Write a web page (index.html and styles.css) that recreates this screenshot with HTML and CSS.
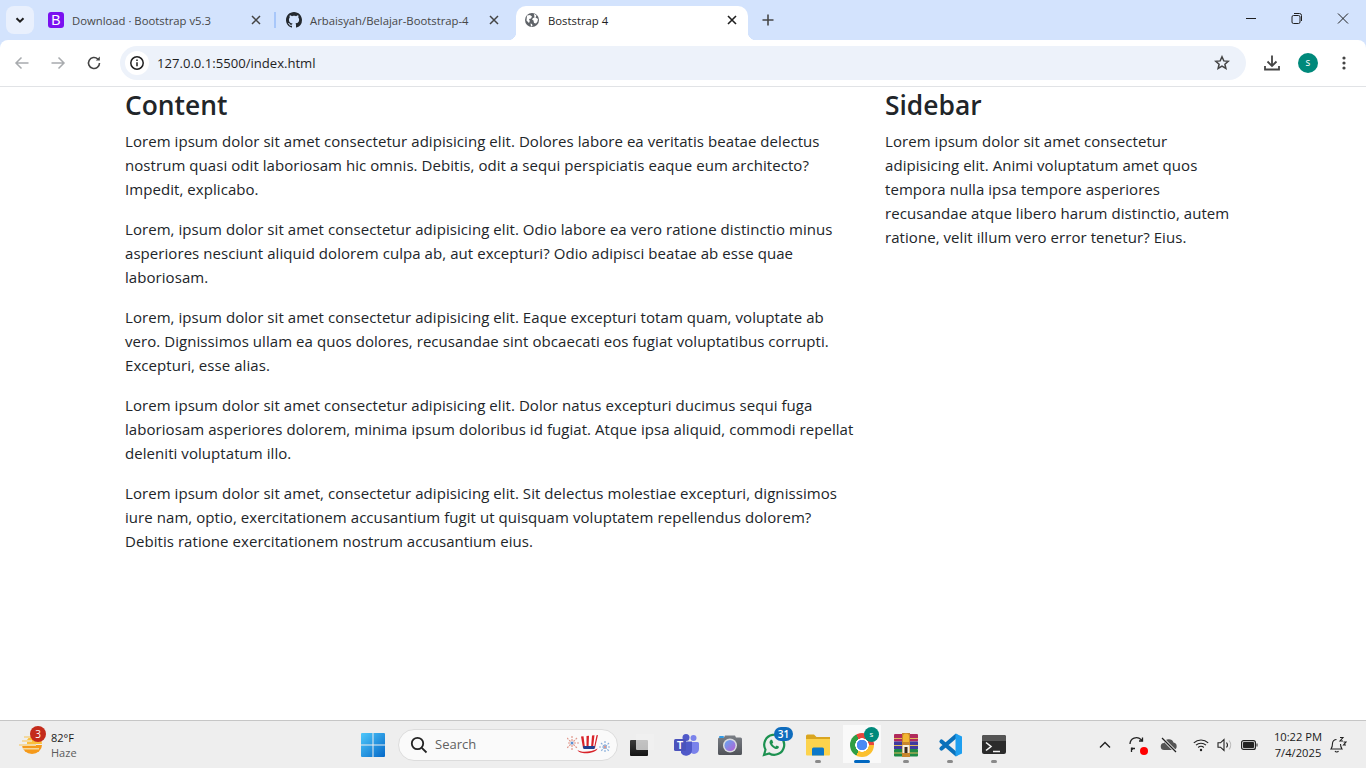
FILE: index.html
```html
<!DOCTYPE html>
<html lang="en">
  <head>
    <meta charset="UTF-8" />
    <title>Bootstrap 4</title>
    <link rel="stylesheet" href="styles.css">
  </head>
  <body>
    <!-- Browser tabs -->
    <div class="tabstrip">
      <button class="tab-menu">
        <svg width="12" height="12" viewBox="0 0 12 12" fill="none" stroke="#1f1f1f" stroke-width="2">
          <path d="M2.5 4.2 6 7.7l3.5-3.5"></path>
        </svg>
      </button>
      <div class="tab">
        <span class="favicon-bootstrap">B</span>
        <span class="tab-title">Download · Bootstrap v5.3</span>
        <svg class="tab-close" width="10" height="10" viewBox="0 0 10 10" stroke="#444" stroke-width="1.5"><path d="M1 1l8 8M9 1l-8 8"></path></svg>
      </div>
      <div class="tab-sep"></div>
      <div class="tab">
        <svg class="favicon" width="16" height="16" viewBox="0 0 16 16" fill="#24292f">
          <path d="M8 0C3.58 0 0 3.58 0 8c0 3.54 2.29 6.53 5.47 7.59.4.07.55-.17.55-.38 0-.19-.01-.82-.01-1.49-2.01.37-2.53-.49-2.69-.94-.09-.23-.48-.94-.82-1.13-.28-.15-.68-.52-.01-.53.63-.01 1.08.58 1.23.82.72 1.21 1.87.87 2.33.66.07-.52.28-.87.51-1.07-1.78-.2-3.64-.89-3.64-3.95 0-.87.31-1.59.82-2.15-.08-.2-.36-1.02.08-2.12 0 0 .67-.21 2.2.82.64-.18 1.32-.27 2-.27.68 0 1.36.09 2 .27 1.53-1.04 2.2-.82 2.2-.82.44 1.1.16 1.92.08 2.12.51.56.82 1.27.82 2.15 0 3.07-1.87 3.75-3.65 3.95.29.25.54.73.54 1.48 0 1.07-.01 1.93-.01 2.2 0 .21.15.46.55.38A8.013 8.013 0 0016 8c0-4.42-3.58-8-8-8z"></path>
        </svg>
        <span class="tab-title">Arbaisyah/Belajar-Bootstrap-4</span>
        <svg class="tab-close" width="10" height="10" viewBox="0 0 10 10" stroke="#444" stroke-width="1.5"><path d="M1 1l8 8M9 1l-8 8"></path></svg>
      </div>
      <div class="tab-sep tab-sep-hidden"></div>
      <div class="tab tab-active">
        <svg class="favicon" width="16" height="16" viewBox="0 0 16 16">
          <circle cx="8" cy="8" r="7" fill="#5f6368"></circle>
          <path d="M3 3.5 6 3l2 1.5-1 2-2 .5.8 2L5 11 2.5 8.5zM10 1.8l2.5 1.7-1 2L14 7l-.5 2.5-1.5 2-2-.5-.5-2.500-1.500-1 1-1.500 1.500-.5zM6.500 11.500 8 12l.5 2-1.500.5z" fill="#fff"></path>
        </svg>
        <span class="tab-title tab-title-active">Boststrap 4</span>
        <svg class="tab-close" width="10" height="10" viewBox="0 0 10 10" stroke="#1f1f1f" stroke-width="1.6"><path d="M1 1l8 8M9 1l-8 8"></path></svg>
      </div>
      <button class="tab-new">
        <svg width="12" height="12" viewBox="0 0 12 12" stroke="#474747" stroke-width="1.6"><path d="M6 .5v11M.5 6h11"></path></svg>
      </button>
      <div class="window-controls">
        <svg width="46" height="12" viewBox="0 0 46 12" stroke="#1f1f1f"><path d="M18 5.5h10"></path></svg>
        <svg width="46" height="12" viewBox="0 0 46 12" fill="none" stroke="#1f1f1f"><rect x="18" y="2.5" width="8" height="8" rx="1.5"></rect><path d="M20 .5h5.500a2 2 0 0 1 2 2V8"></path></svg>
        <svg width="46" height="12" viewBox="0 0 46 12" stroke="#1f1f1f"><path d="M18 .5l10 10M28 .5l-10 10"></path></svg>
      </div>
    </div>

    <!-- Address bar -->
    <div class="toolbar">
      <svg class="tool-icon" width="16" height="16" viewBox="0 0 16 16" fill="none" stroke="#a8abae" stroke-width="1.5"><path d="M14.5 8H2M7.5 2.500 2 8l5.500 5.500"></path></svg>
      <svg class="tool-icon" width="16" height="16" viewBox="0 0 16 16" fill="none" stroke="#a8abae" stroke-width="1.5"><path d="M1.500 8H14M8.500 2.500 14 8l-5.500 5.500"></path></svg>
      <svg class="tool-icon" width="16" height="16" viewBox="0 0 16 16" fill="none" stroke="#444" stroke-width="1.6"><path d="M13.5 8A5.500 5.500 0 1 1 11.800 4"></path><path d="M13.800 1.500v4h-4" fill="#444" stroke="none"></path></svg>
      <div class="omnibox">
        <span class="site-info">
          <svg width="16" height="16" viewBox="0 0 16 16" fill="none" stroke="#1f1f1f" stroke-width="1.5"><circle cx="8" cy="8" r="6.2"></circle><path d="M8 7.200v4M8 4.500v1.500"></path></svg>
        </span>
        <span class="url">127.0.0.1:5500/index.html</span>
        <svg class="star" width="16" height="16" viewBox="0 0 16 16" fill="none" stroke="#444" stroke-width="1.5"><path d="M8 1.800l1.800 4.100 4.400.4-3.300 2.900 1 4.300L8 11.200l-3.900 2.300 1-4.300-3.300-2.900 4.400-.4z"></path></svg>
      </div>
      <svg class="download" width="16" height="16" viewBox="0 0 16 16" fill="none" stroke="#444" stroke-width="1.8"><path d="M8 .5v10M3.500 6.500 8 11l4.500-4.500M1 11v3.500h14V11"></path></svg>
      <span class="avatar">s</span>
      <svg class="dots" width="4" height="14" viewBox="0 0 4 14" fill="#444"><circle cx="2" cy="2" r="1.6"></circle><circle cx="2" cy="7" r="1.6"></circle><circle cx="2" cy="12" r="1.6"></circle></svg>
    </div>

    <!-- The page itself -->
    <main class="page">
      <div class="container">
        <div class="content">
          <h2>Content</h2>
          <p>Lorem ipsum dolor sit amet consectetur adipisicing elit. Dolores labore ea veritatis beatae delectus nostrum quasi odit laboriosam hic omnis. Debitis, odit a sequi perspiciatis eaque eum architecto? Impedit, explicabo.</p>
          <p>Lorem, ipsum dolor sit amet consectetur adipisicing elit. Odio labore ea vero ratione distinctio minus asperiores nesciunt aliquid dolorem culpa ab, aut excepturi? Odio adipisci beatae ab esse quae laboriosam.</p>
          <p>Lorem, ipsum dolor sit amet consectetur adipisicing elit. Eaque excepturi totam quam, voluptate ab vero. Dignissimos ullam ea quos dolores, recusandae sint obcaecati eos fugiat voluptatibus corrupti. Excepturi, esse alias.</p>
          <p>Lorem ipsum dolor sit amet consectetur adipisicing elit. Dolor natus excepturi ducimus sequi fuga laboriosam asperiores dolorem, minima ipsum doloribus id fugiat. Atque ipsa aliquid, commodi repellat deleniti voluptatum illo.</p>
          <p>Lorem ipsum dolor sit amet, consectetur adipisicing elit. Sit delectus molestiae excepturi, dignissimos iure nam, optio, exercitationem accusantium fugit ut quisquam voluptatem repellendus dolorem? Debitis ratione exercitationem nostrum accusantium eius.</p>
        </div>
        <div class="sidebar">
          <h2>Sidebar</h2>
          <p>Lorem ipsum dolor sit amet consectetur adipisicing elit. Animi voluptatum amet quos tempora nulla ipsa tempore asperiores recusandae atque libero harum distinctio, autem ratione, velit illum vero error tenetur? Eius.</p>
        </div>
      </div>
    </main>

    <!-- Windows taskbar -->
    <footer class="taskbar">
      <div class="weather">
        <span class="weather-icon">
          <svg width="26" height="24" viewBox="0 0 26 24">
            <path d="M4 13h20a10 9 0 0 1-20 0z" fill="#f59a1b"></path>
            <path d="M9 8a8 8 0 0 1 15 4H9z" fill="#fbbf3c"></path>
            <path d="M1 12h17v2H1zM4 8h10v2H4zM6 4h6v2H6zM5 16h16v1.500H5z" fill="#f3d9a0"></path>
          </svg>
          <span class="weather-badge">3</span>
        </span>
        <span class="weather-text">
          <span class="weather-temp">82°F</span>
          <span class="weather-desc">Haze</span>
        </span>
      </div>

      <div class="task-slot task-start">
        <svg width="24" height="24" viewBox="0 0 24 24">
          <defs>
            <linearGradient id="winBlue" x1="0" y1="0" x2="1" y2="1"><stop offset="0" stop-color="#4fc8fb"></stop><stop offset="1" stop-color="#0468c8"></stop></linearGradient>
          </defs>
          <path d="M0 1a1 1 0 0 1 1-1h10.500v11.500H0zM12.500 0H23a1 1 0 0 1 1 1v10.500H12.500zM0 12.500h11.500V24H1a1 1 0 0 1-1-1zM12.500 12.500H24V23a1 1 0 0 1-1 1H12.500z" fill="url(#winBlue)"></path>
        </svg>
      </div>

      <div class="search">
        <svg width="18" height="18" viewBox="0 0 18 18" fill="none" stroke="#222" stroke-width="1.8"><circle cx="7.500" cy="7.500" r="5.700"></circle><path d="M11.800 11.800 16.500 16.500"></path></svg>
        <span class="search-text">Search</span>
        <svg class="search-art" width="48" height="22" viewBox="0 0 48 22">
          <g stroke="#e0988c" stroke-width="1.2" stroke-dasharray="2 1"><path d="M5 2v14M-2 9h14M0 4l10 10M10 4 0 14"></path></g>
          <circle cx="5" cy="9" r="1.500" fill="#5b8fd0"></circle>
          <g stroke="#8ab0dc" stroke-width="1.2" stroke-dasharray="2 1"><path d="M38 7v12M32 13h12M34 9l8 8M42 9l-8 8"></path></g>
          <circle cx="38" cy="13" r="1.200" fill="#e0988c"></circle>
          <path d="M14 2.500 31 1l-3 13H16z" fill="#fff"></path>
          <path d="M14 2.500l2.500-.2L18 14h-2zM19.500 2l2.500-.2-.5 12.200h-2zM25 1.500 27.500 1.300 26 14h-2zM29.500 1.200 31 1l-3 13h-1z" fill="#d8232a"></path>
          <path d="M16 12h12l-.5 3H16.500z" fill="#22408f"></path>
          <path d="M10.500 16c4 3 14 2 20-1.500-1 5-18 7-20 1.500z" fill="#d8232a"></path>
        </svg>
      </div>

      <div class="task-slot">
        <span class="taskview">
          <span class="taskview-back"></span>
          <span class="taskview-front"></span>
        </span>
      </div>
      <div class="task-slot">
        <svg width="25" height="22" viewBox="0 0 25 22">
          <circle cx="19.500" cy="4" r="3" fill="#7b83eb"></circle>
          <path d="M15 8h8.500A1.500 1.500 0 0 1 25 9.500V15a5 5 0 0 1-10 0z" fill="#7b83eb"></path>
          <circle cx="12" cy="3.500" r="3.500" fill="#5059c9"></circle>
          <path d="M7 7.500h11V16a6 6 0 0 1-11 3z" fill="#5059c9"></path>
          <rect x="0" y="5" width="12" height="12" rx="1.500" fill="#4b53bc"></rect>
          <text class="teams-t" x="6" y="15">T</text>
        </svg>
      </div>
      <div class="task-slot">
        <svg width="24" height="20" viewBox="0 0 24 20">
          <defs>
            <linearGradient id="lens" x1="0" y1="0" x2="1" y2="1"><stop offset="0" stop-color="#62a9f0"></stop><stop offset="1" stop-color="#b65fd6"></stop></linearGradient>
            <linearGradient id="camBody" x1="0" y1="0" x2="0" y2="1"><stop offset="0" stop-color="#7b7f86"></stop><stop offset="1" stop-color="#505359"></stop></linearGradient>
          </defs>
          <path d="M0 4a1.500 1.500 0 0 1 1.500-1.500H6L7 .5h10l1 2h4.500A1.500 1.500 0 0 1 24 4v14.500a1.500 1.500 0 0 1-1.500 1.500h-21A1.500 1.500 0 0 1 0 18.500z" fill="url(#camBody)"></path>
          <rect x="1" y="1" width="5" height="2" rx="1" fill="#2f9be8"></rect>
          <circle cx="12" cy="10.500" r="7" fill="#d9dbe0"></circle>
          <circle cx="12" cy="10.500" r="5.500" fill="url(#lens)"></circle>
        </svg>
      </div>
      <div class="task-slot">
        <svg width="24" height="24" viewBox="0 0 24 24" fill="none">
          <path d="M2 22l1.500-5.300A10 10 0 1 1 7.300 20.500z" stroke="#1c9150" stroke-width="2.200"></path>
          <path d="M8.500 7.200c-1 .8-1.300 2.300-.5 3.900 1 2 2.800 3.800 4.900 4.700 1.500.6 3 .3 3.700-.8.4-.7.4-1.200.2-1.400l-2.200-1.100-1.100 1.200c-1.400-.5-2.700-1.700-3.300-3l1-1.200-1-2.400c-.2-.3-1.500-.5-1.700-.1z" fill="#1c9150"></path>
        </svg>
        <span class="whatsapp-badge">31</span>
      </div>
      <div class="task-slot">
        <svg width="24" height="22" viewBox="0 0 24 22">
          <path d="M0 2a1.500 1.500 0 0 1 1.500-1.500H8L10.500 3H24v4H0z" fill="#d9a520"></path>
          <path d="M0 5h24v15.500a1 1 0 0 1-1 1H1a1 1 0 0 1-1-1z" fill="#fcd34d"></path>
          <path d="M6 15a1.500 1.500 0 0 1 1.500-1.500h9A1.500 1.500 0 0 1 18 15v6.500H6z" fill="#0c78c9"></path>
        </svg>
        <span class="task-dot"></span>
      </div>
      <div class="task-slot task-active">
        <span class="chrome-logo"></span>
        <span class="chrome-badge">s</span>
        <span class="task-underline"></span>
      </div>
      <div class="task-slot">
        <svg width="24" height="24" viewBox="0 0 24 24">
          <rect x="0" y="1" width="24" height="7.500" rx="1" fill="#b02a5b"></rect>
          <rect x="0" y="8.500" width="24" height="7.500" fill="#3f3a9e"></rect>
          <rect x="0" y="16" width="24" height="7.500" rx="1" fill="#1e8a45"></rect>
          <path d="M0 5h24v1H0zM0 12h24v1H0zM0 19.500h24v1H0z" fill="#e0b85a"></path>
          <rect x="8" y="0" width="8" height="24" fill="#c8862e"></rect>
          <path d="M9 3.500a3 3 0 0 1 6 0V9H9z" fill="#f2b632"></path>
          <rect x="8.500" y="12" width="7" height="8" fill="#f6efe0"></rect>
          <rect x="10.500" y="14" width="3" height="6" fill="#3a2a1e"></rect>
        </svg>
        <span class="task-dot"></span>
      </div>
      <div class="task-slot">
        <svg width="24" height="24" viewBox="0 0 24 24" fill="none">
          <path d="M18 3 3.500 15.500M3.500 8.500 18 21" stroke="#0a70ba" stroke-width="4.200" stroke-linecap="round"></path>
          <path d="M17.500.5 24 3.500v17l-6.500 3z" fill="#1e9ff0"></path>
        </svg>
        <span class="task-dot"></span>
      </div>
      <div class="task-slot">
        <span class="terminal">
          <span class="terminal-head"></span>
          <svg width="24" height="13" viewBox="0 0 24 13" fill="none" stroke="#f2f2f2" stroke-width="1.6"><path d="M4 1.500 9 5.500l-5 4M11 10.500h7"></path></svg>
        </span>
        <span class="task-dot"></span>
      </div>

      <div class="tray">
        <svg class="tray-chevron" width="12" height="8" viewBox="0 0 12 8" fill="none" stroke="#222" stroke-width="1.4"><path d="M1 6.500 6 1.500l5 5"></path></svg>
        <span class="tray-sync">
          <svg width="18" height="18" viewBox="0 0 18 18" fill="none" stroke="#222" stroke-width="1.3">
            <path d="M2 8a6.500 6.500 0 0 1 11-4.500l1.500 1.500M14.500 1.500V5H11M3.500 11.500l1.500 2M3.500 16v-3.500H7"></path>
          </svg>
          <span class="tray-sync-dot"></span>
        </span>
        <svg class="tray-cloud" width="18" height="16" viewBox="0 0 18 16">
          <path d="M4.500 13a3.500 3.500 0 0 1-.5-7 5 5 0 0 1 9.500-.5A3.800 3.800 0 0 1 13.500 13z" fill="#555"></path>
          <path d="M2 1l14 14" stroke="#eeeeee" stroke-width="3"></path>
          <path d="M2 1l14 14" stroke="#222" stroke-width="1.2"></path>
        </svg>
        <svg class="tray-wifi" width="16" height="14" viewBox="0 0 16 14" fill="none" stroke="#222" stroke-width="1.1">
          <path d="M.8 4.800a10.500 10.500 0 0 1 14.400 0M3 7.200a7.300 7.300 0 0 1 10 0M5.200 9.500a4 4 0 0 1 5.600 0"></path>
          <circle cx="8" cy="12" r="1.2" fill="#222" stroke="none"></circle>
        </svg>
        <svg class="tray-volume" width="17" height="14" viewBox="0 0 17 14" fill="none" stroke="#222" stroke-width="1.1">
          <path d="M1 4.800h2.500L7 1.500v11L3.500 9.200H1z"></path>
          <path d="M9.500 4.500a4 4 0 0 1 0 5"></path>
          <path d="M12 2.500a7 7 0 0 1 0 9" stroke="#b8b8b8"></path>
        </svg>
        <svg class="tray-battery" width="17" height="10" viewBox="0 0 17 10">
          <rect x=".6" y=".6" width="13.800" height="8.800" rx="2" fill="none" stroke="#222" stroke-width="1.2"></rect>
          <rect x="2" y="2" width="11" height="6" rx=".8" fill="#222"></rect>
          <path d="M15.500 3.500h1v3h-1z" fill="#222"></path>
        </svg>
        <span class="clock">
          <span>10:22 PM</span>
          <span>7/4/2025</span>
        </span>
        <svg class="tray-bell" width="18" height="18" viewBox="0 0 18 18" fill="none" stroke="#222" stroke-width="1.1">
          <path d="M7.500 3.500A4 4 0 0 0 3.500 7.500c0 3-.5 4-1.500 5.500h11c-1-1.500-1.500-2.500-1.500-5"></path>
          <path d="M6 15a2 2 0 0 0 3.500 0M11 1.500h3l-3 3.500h3M14.500 6h2.500l-2.500 3H17"></path>
        </svg>
      </div>
    </footer>
  </body>
</html>
```

FILE: styles.css
```css
* {
  margin: 0;
  padding: 0;
  box-sizing: border-box;
}

html,
body {
  height: 100%;
}

body {
  display: flex;
  flex-direction: column;
  overflow: hidden;
  background-color: #d3e3fd;
  font-family: "Open Sans", "Noto Sans", sans-serif;
  color: #212529;
}

button {
  border: none;
  background: none;
}

svg {
  display: block;
  flex-shrink: 0;
}

/* Browser tabs */
.tabstrip {
  display: flex;
  align-items: flex-end;
  height: 40px;
  padding-left: 6px;
  background-color: #d3e3fd;
}

.tab-menu {
  display: flex;
  align-items: center;
  justify-content: center;
  width: 28px;
  height: 28px;
  margin: 0 6px 6px 0;
  border-radius: 8px;
  background-color: #e9f0fd;
}

.tab {
  position: relative;
  display: flex;
  align-items: center;
  width: 232px;
  height: 34px;
  padding: 0 11px 6px 8px;
  border-radius: 10px 10px 0 0;
}

.tab-active {
  background-color: white;
}

.tab-active::before,
.tab-active::after {
  content: "";
  position: absolute;
  bottom: 0;
  width: 8px;
  height: 8px;
}

.tab-active::before {
  left: -8px;
  background: radial-gradient(circle at 0 0, transparent 8px, white 8.5px);
}

.tab-active::after {
  right: -8px;
  background: radial-gradient(circle at 100% 0, transparent 8px, white 8.5px);
}

.favicon {
  margin-right: 8px;
}

.favicon-bootstrap {
  display: flex;
  align-items: center;
  justify-content: center;
  width: 16px;
  height: 16px;
  margin-right: 8px;
  border-radius: 3px;
  background-color: #7a10f0;
  color: white;
  font-family: "Liberation Sans", sans-serif;
  font-size: 14px;
}

.tab-title {
  flex: 1;
  font-size: 11.3px;
  color: #474747;
  white-space: nowrap;
}

.tab-title-active {
  color: #1f1f1f;
}

.tab-sep {
  width: 2px;
  height: 16px;
  margin: 0 2px 12px;
  background-color: #a8c7fa;
}

.tab-sep-hidden {
  background-color: transparent;
}

.tab-new {
  display: flex;
  align-items: center;
  justify-content: center;
  width: 28px;
  height: 28px;
  margin: 0 0 6px 6px;
}

.window-controls {
  display: flex;
  align-items: center;
  height: 40px;
  margin-left: auto;
  padding-bottom: 2px;
}

/* Address bar */
.toolbar {
  display: flex;
  align-items: center;
  height: 47px;
  padding: 0 14px;
  border-bottom: 1px solid #e1e3e6;
  border-radius: 8px 8px 0 0;
  background-color: white;
}

.tool-icon {
  margin-right: 20px;
}

.omnibox {
  display: flex;
  align-items: center;
  width: 1126px;
  height: 34px;
  margin-left: -2px;
  padding: 0 16px 0 5px;
  border-radius: 17px;
  background-color: #edf2fa;
}

.site-info {
  display: flex;
  align-items: center;
  justify-content: center;
  width: 24px;
  height: 24px;
  margin-right: 8px;
  border-radius: 50%;
  background-color: white;
}

.url {
  flex: 1;
  font-size: 13.1px;
  color: #1f1f1f;
}

.download {
  margin-left: 18px;
}

.avatar {
  display: flex;
  align-items: center;
  justify-content: center;
  width: 20px;
  height: 20px;
  margin-left: 18px;
  padding-bottom: 2px;
  border-radius: 50%;
  background-color: #00897b;
  color: white;
  font-size: 10px;
}

.dots {
  margin-left: 24px;
}

/* The page itself */
.page {
  flex: 1;
  background-color: white;
}

.container {
  display: flex;
  width: 1140px;
  margin: 0 auto;
}

.content {
  width: 760px;
  padding: 0 12px;
}

.sidebar {
  width: 380px;
  padding: 0 12px;
}

h2 {
  height: 36px;
  margin-bottom: 6px;
  font-size: 26.4px;
  font-weight: 600;
  line-height: 36px;
}

p {
  margin-bottom: 16px;
  font-size: 15px;
  letter-spacing: 0.06px;
  line-height: 24px;
}

/* Windows taskbar */
.taskbar {
  display: flex;
  align-items: center;
  height: 48px;
  border-top: 1px solid #c6c6c6;
  background-color: #eeeeee;
}

.weather {
  display: flex;
  align-items: center;
  width: 351px;
  padding-left: 18px;
}

.weather-icon {
  position: relative;
  width: 33px;
  height: 26px;
}

.weather-badge {
  position: absolute;
  top: -6px;
  left: 12px;
  display: flex;
  align-items: center;
  justify-content: center;
  width: 16px;
  height: 16px;
  border-radius: 50%;
  background-color: #c42b1c;
  color: white;
  font-size: 10px;
}

.weather-text {
  display: flex;
  flex-direction: column;
  font-size: 11px;
  line-height: 15px;
}

.weather-temp {
  color: #1a1a1a;
}

.weather-desc {
  color: #5c5c5c;
}

.task-slot {
  position: relative;
  display: flex;
  align-items: center;
  justify-content: center;
  width: 44px;
  height: 47px;
}

.task-start {
  margin-right: 3px;
}

.search {
  display: flex;
  align-items: center;
  width: 220px;
  height: 32px;
  margin-right: 2px;
  padding: 0 2px 0 11px;
  border: 1px solid #dcdcdc;
  border-radius: 16px;
  background-color: #fafafa;
}

.search-text {
  flex: 1;
  margin-left: 7px;
  padding-bottom: 2px;
  font-size: 13px;
  color: #616161;
}

.taskview {
  position: relative;
  display: block;
  width: 24px;
  height: 22px;
}

.taskview-back {
  position: absolute;
  bottom: 0;
  left: 0;
  width: 18px;
  height: 16px;
  border-radius: 1px;
  background: linear-gradient(#3c3c3c, #141414);
}

.taskview-front {
  position: absolute;
  top: 0;
  right: 0;
  width: 18px;
  height: 16px;
  border-radius: 1px;
  background-color: rgba(240, 240, 240, 0.75);
}

.teams-t {
  fill: white;
  font-family: "Liberation Sans", sans-serif;
  font-size: 10px;
  font-weight: bold;
  text-anchor: middle;
}

.whatsapp-badge {
  position: absolute;
  top: 6px;
  left: 22px;
  display: flex;
  align-items: center;
  justify-content: center;
  width: 19px;
  height: 14px;
  border-radius: 7px;
  background-color: #0f6cbd;
  color: white;
  font-size: 10px;
  font-weight: 600;
}

.task-dot {
  position: absolute;
  bottom: 5px;
  left: 19px;
  width: 6px;
  height: 3px;
  border-radius: 2px;
  background-color: #8a8a8a;
}

.task-active {
  background: linear-gradient(#f9f9f9, #f9f9f9) center 4px / 38px 38px no-repeat;
}

.chrome-logo {
  width: 24px;
  height: 24px;
  border-radius: 50%;
  background:
    radial-gradient(circle, #4a8af4 0 5px, white 5.5px 6.5px, transparent 7px),
    conic-gradient(from -30deg, #e8453c 0 120deg, #fbc02d 120deg 240deg, #2f9e44 240deg 360deg);
}

.chrome-badge {
  position: absolute;
  top: 6px;
  left: 24px;
  display: flex;
  align-items: center;
  justify-content: center;
  width: 15px;
  height: 15px;
  padding-bottom: 2px;
  border-radius: 50%;
  background-color: #00897b;
  color: white;
  font-size: 8px;
}

.task-underline {
  position: absolute;
  bottom: 5px;
  left: 14px;
  width: 16px;
  height: 3px;
  border-radius: 2px;
  background-color: #0067c0;
}

.terminal {
  display: block;
  width: 24px;
  height: 19px;
  border-radius: 2px;
  overflow: hidden;
  background-color: #2b2b2b;
}

.terminal-head {
  display: block;
  height: 6px;
  background-color: #555;
}

.tray {
  display: flex;
  align-items: center;
  margin-left: auto;
  padding-right: 19px;
}

.tray-sync {
  position: relative;
  display: block;
  width: 18px;
  height: 18px;
  margin-left: 17px;
}

.tray-sync-dot {
  position: absolute;
  right: -2px;
  bottom: -1px;
  width: 8px;
  height: 8px;
  border-radius: 50%;
  background-color: #f00;
}

.tray-cloud {
  margin-left: 14px;
}

.tray-wifi {
  margin-left: 15px;
}

.tray-volume {
  margin-left: 8px;
}

.tray-battery {
  margin-left: 7px;
}

.clock {
  display: flex;
  flex-direction: column;
  align-items: center;
  width: 52px;
  margin-left: 14px;
  font-size: 11.2px;
  line-height: 16px;
  color: #1a1a1a;
}

.tray-bell {
  margin-left: 5px;
}
```
